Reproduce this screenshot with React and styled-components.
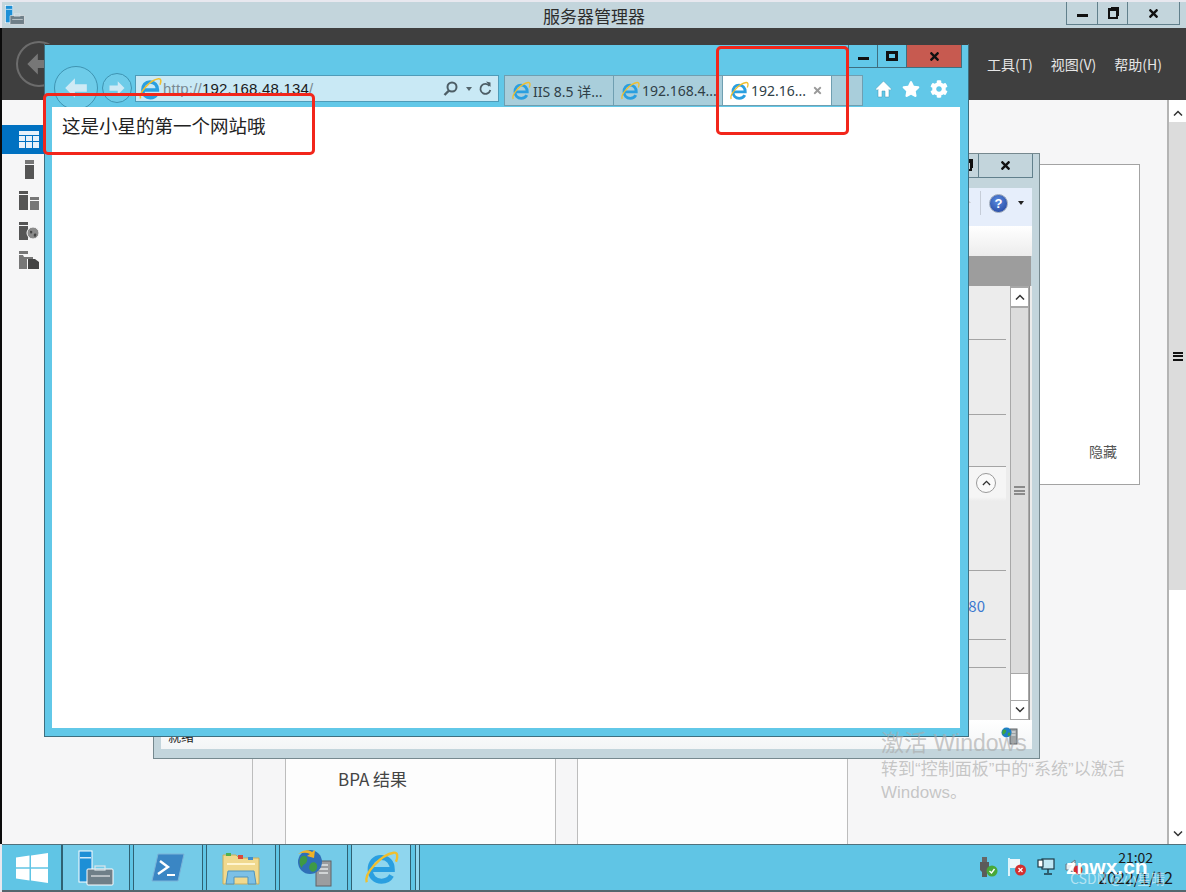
import React from 'react'
import styled, { createGlobalStyle } from 'styled-components'
import { FaStar, FaCog, FaTimes } from 'react-icons/fa'

const cjk = '"Noto Sans CJK SC", "Noto Sans", sans-serif'

const GlobalStyle = createGlobalStyle`
  html, body {
    margin: 0;
    padding: 0;
    background: #e8e8ef;
  }
  * {
    box-sizing: border-box;
  }
`

const Desktop = styled.div`
  position: relative;
  width: 1186px;
  height: 892px;
  overflow: hidden;
  padding-top: 2px;
  display: flex;
  flex-direction: column;
  font-family: ${cjk};
  color: #333;
  background: #e8e8ef;
`

const TitleBar = styled.header`
  height: 26px;
  flex: none;
  margin-left: 2px;
  background: #c3d5dc;
  display: flex;
  justify-content: center;
  position: relative;
  align-items: center;
  font-size: 17px;
  color: #2d2d2d;
`

const AppIcon = styled.div`
  position: absolute;
  left: 3px;
  top: 3px;
  line-height: 0;
`

const CaptionGroup = styled.div`
  position: absolute;
  top: 0;
  right: ${p => p.$right}px;
  display: flex;
`

const CaptionButton = styled.div`
  width: ${p => p.$w}px;
  height: ${p => p.$h || 23}px;
  display: flex;
  align-items: center;
  justify-content: center;
  background: ${p => p.$bg || 'transparent'};
  border: 1px solid ${p => p.$line || '#61808c'};
  border-top: 0;
  border-left-width: ${p => (p.$first ? 1 : 0)}px;
  color: #111;
`

const MinGlyph = styled.span`
  width: 11px;
  height: 3px;
  margin-top: 4px;
  background: #111;
`

const MaxGlyph = styled.span`
  width: 12px;
  height: 10px;
  border: 3px solid #111;
`

const RestoreGlyph = styled.span`
  width: 10px;
  height: 11px;
  border: 2px solid #111;
  border-top-width: 3px;
  box-shadow: 2px -2px 0 -1px #111;
`

const NavBar = styled.nav`
  height: 72px;
  flex: none;
  background: #3f3f3f;
  border-left: 2px solid #0b0b0b;
  display: flex;
  align-items: center;
  justify-content: space-between;
  padding: 0 24px 0 14px;
`

const BackCircle = styled.div`
  width: 46px;
  height: 46px;
  border-radius: 50%;
  border: 2px solid #6c6c6c;
  display: flex;
  align-items: center;
  justify-content: center;
  color: #777;
`

const MenuList = styled.div`
  display: flex;
  gap: 18px;
  font-size: 14px;
  color: #e6e6e6;
`

const Body = styled.div`
  flex: 1;
  min-height: 0;
  display: flex;
  border-left: 2px solid #0b0b0b;
  background: #f6f6f7;
`

const Sidebar = styled.aside`
  width: 42px;
  flex: none;
  padding-top: 25px;
  display: flex;
  flex-direction: column;
`

const SideItem = styled.div`
  height: ${p => p.$h}px;
  padding-left: 12px;
  display: flex;
  align-items: center;
  justify-content: center;
  background: ${p => (p.$active ? '#0071c1' : 'transparent')};
`

const Main = styled.main`
  flex: 1;
  min-width: 0;
  padding-top: 64px;
  display: flex;
  flex-direction: column;
`

const HidePanel = styled.section`
  align-self: flex-end;
  margin-right: 27px;
  width: 200px;
  height: 321px;
  background: #fff;
  border: 1px solid #a3a3a3;
  display: flex;
  align-items: flex-end;
  justify-content: flex-end;
  padding: 0 22px 23px 0;
  font-size: 14px;
  color: #555;
`

const TileRow = styled.div`
  flex: 1;
  margin-top: 15px;
  display: flex;
`

const Tile = styled.div`
  width: ${p => p.$w}px;
  margin-right: ${p => p.$gap}px;
  background: ${p => (p.$blank ? 'transparent' : '#fdfdfd')};
  border-right: 1px solid #bdbdbd;
  border-left: ${p => (p.$blank ? 0 : '1px solid #bdbdbd')};
  padding: 266px 0 0 52px;
  font-size: 17px;
  color: #444;
`

const PageScroll = styled.div`
  width: 19px;
  flex: none;
  padding-top: 4px;
  background: #fff;
  border-left: 2px solid #b4b4b4;
  display: flex;
  flex-direction: column;
`

const ScrollButton = styled.div`
  height: ${p => p.$h || 18}px;
  flex: none;
  background: #fff;
  display: flex;
  align-items: center;
  justify-content: center;
  color: #333;
`

const ScrollThumb = styled.div`
  height: ${p => p.$h}px;
  flex: none;
  background: #dcdcdc;
  display: flex;
  align-items: center;
  justify-content: center;
`

const ScrollFill = styled.div`
  flex: 1;
`

const Grip = styled.span`
  width: ${p => p.$w}px;
  height: 9px;
  border-top: 2px solid ${p => p.$color};
  border-bottom: 2px solid ${p => p.$color};
  position: relative;
  &::after {
    content: '';
    position: absolute;
    left: 0;
    right: 0;
    top: 1.5px;
    height: 2px;
    background: ${p => p.$color};
  }
`

const Taskbar = styled.footer`
  height: 48px;
  flex: none;
  margin-left: 2px;
  background: #60c5e5;
  border-top: 1px solid #51717c;
  border-bottom: 2px solid #55666d;
  display: flex;
  position: relative;
`

const TaskButton = styled.div`
  width: ${p => p.$w}px;
  margin-right: ${p => p.$gap ?? 3}px;
  flex: none;
  background: ${p => (p.$active ? '#8fd6ee' : p.$plain ? 'transparent' : '#74cbe8')};
  border-right: 1px solid #2f6173;
  border-left: ${p => (p.$plain ? 0 : '1px solid #2f6173')};
  display: flex;
  align-items: center;
  justify-content: center;
`

const Tray = styled.div`
  position: absolute;
  left: 977px;
  top: 12px;
  display: flex;
  gap: 10px;
  align-items: center;
`

const Clock = styled.div`
  position: absolute;
  right: 13px;
  top: 3px;
  text-align: center;
  font-size: 14px;
  line-height: 19px;
  color: #1a1a1a;
`

const ClockDate = styled.div`
  font-size: 16px;
  line-height: 21px;
`

const StampBrand = styled.div`
  position: absolute;
  left: 1064px;
  top: 10px;
  font-family: "Liberation Sans", sans-serif;
  font-size: 21px;
  font-weight: 700;
  line-height: 24px;
  color: #fff;
`

const StampAuthor = styled.div`
  position: absolute;
  left: 1068px;
  top: 23px;
  font-size: 14px;
  line-height: 20px;
  color: rgba(255, 255, 255, 0.55);
`

const Window = styled.div`
  position: absolute;
  left: ${p => p.$x}px;
  top: ${p => p.$y}px;
  width: ${p => p.$w}px;
  height: ${p => p.$h}px;
  display: flex;
  flex-direction: column;
`

const BackWindow = styled(Window)`
  background: #c3d5dc;
  border: 1px solid #76898f;
  padding: 0 7px 9px;
`

const BackCaption = styled.div`
  height: 34px;
  flex: none;
  position: relative;
`

const BackToolbar = styled.div`
  height: 38px;
  flex: none;
  background: #e6eefb;
  display: flex;
  align-items: center;
  justify-content: flex-end;
  gap: 8px;
  padding: 0 8px 8px 0;
  color: #222;
`

const ToolDivider = styled.span`
  width: 1px;
  height: 24px;
  background: #c6cdd8;
`

const HelpBadge = styled.span`
  width: 19px;
  height: 19px;
  border-radius: 50%;
  background: radial-gradient(circle at 45% 35%, #5a8ce0, #1f3f9a);
  border: 1px solid #9aa6b8;
  color: #fff;
  font-family: "Liberation Sans", sans-serif;
  font-size: 13px;
  font-weight: 700;
  line-height: 17px;
  text-align: center;
`

const DropArrow = styled.span`
  width: 0;
  height: 0;
  margin: 0 0 0 2px;
  border-left: 3px solid transparent;
  border-right: 3px solid transparent;
  border-top: 4px solid ${p => p.$color || '#222'};
`

const BackBand = styled.div`
  height: 30px;
  flex: none;
  background: linear-gradient(#fff, #ececec);
`

const GreyBand = styled.div`
  height: 30px;
  flex: none;
  margin-right: 1px;
  background: #9d9d9d;
`

const ListArea = styled.div`
  height: 434px;
  flex: none;
  display: flex;
  background: #ececec;
`

const ListRows = styled.div`
  flex: 1;
  padding-right: 4px;
`

const ListRow = styled.div`
  height: ${p => p.$h}px;
  border-bottom: 1px solid #a4a4a4;
  display: flex;
  align-items: ${p => (p.$top ? 'flex-start' : 'center')};
  justify-content: flex-end;
  padding-right: ${p => p.$pad || 0}px;
  padding-top: ${p => (p.$top ? 6 : 0)}px;
  font-size: 15px;
  color: #3b78d0;
  background: ${p => (p.$light ? 'linear-gradient(#f5f5f5 0, #f5f5f5 30px, #ececec 34px)' : 'transparent')};
`

const Collapse = styled.span`
  width: 20px;
  height: 20px;
  border-radius: 50%;
  border: 1px solid #9a9a9a;
  background: #fafafa;
  display: flex;
  align-items: center;
  justify-content: center;
`

const ListScroll = styled.div`
  width: 20px;
  flex: none;
  margin-right: 2px;
  padding: 2px 1px 1px;
  display: flex;
  flex-direction: column;
  border-right: 1px solid #8f8f8f;
  background: #a8a8a8;
`

const ListThumb = styled.div`
  height: 365px;
  flex: none;
  margin-top: 2px;
  background: #dcdcdc;
  display: flex;
  align-items: center;
  justify-content: center;
`

const ListGap = styled.div`
  flex: 1;
  margin: 1px 0;
  background: #fff;
`

const StatusBar = styled.div`
  flex: 1;
  background: linear-gradient(#fff, #f3f5f6);
  display: flex;
  justify-content: flex-end;
  position: relative;
  padding: 7px 14px 0 0;
`

const StatusText = styled.span`
  position: absolute;
  left: 7px;
  top: 7px;
  font-size: 13px;
  line-height: 18px;
  color: #222;
`

const IeWindow = styled(Window)`
  background: #62c8e8;
  border: 1px solid #3e6f80;
  border-top: 0;
`

const IeCaption = styled.div`
  height: 31px;
  flex: none;
  position: relative;
  border-top: 1px solid #3f3f3f;
`

const IeNavRow = styled.div`
  height: 32px;
  flex: none;
  display: flex;
  align-items: flex-start;
  padding-left: 9px;
`

const HistoryCircle = styled.div`
  width: ${p => p.$size}px;
  height: ${p => p.$size}px;
  margin-top: ${p => p.$top}px;
  margin-right: ${p => p.$right}px;
  flex: none;
  border-radius: 50%;
  border: 1px solid #3f94b2;
  background: rgba(255, 255, 255, 0.08);
  display: flex;
  align-items: center;
  justify-content: center;
`

const AddressBar = styled.div`
  width: 364px;
  height: 27px;
  flex: none;
  margin-right: 5px;
  padding: 0 6px 0 2px;
  background: #c9e9f5;
  border: 1px solid #4f9cb9;
  display: flex;
  align-items: center;
  font-family: "Liberation Sans", sans-serif;
  font-size: 15px;
  letter-spacing: 0.2px;
  color: #7a8a92;
`

const UrlHost = styled.span`
  color: #1b1b1b;
`

const UrlText = styled.span`
  margin-left: 1px;
  flex: 1;
  white-space: nowrap;
`

const AddressTools = styled.span`
  display: flex;
  align-items: center;
  gap: 6px;
  color: #55666d;
`

const TabStrip = styled.div`
  display: flex;
  height: 31px;
`

const Tab = styled.div`
  width: ${p => p.$w}px;
  flex: none;
  height: 31px;
  padding: 0 5px 0 6px;
  display: flex;
  align-items: center;
  gap: 2px;
  background: ${p => (p.$active ? '#fff' : '#a9cedb')};
  border: 1px solid #6f9fb1;
  border-left-width: ${p => (p.$first ? 1 : 0)}px;
  font-family: "Noto Sans", ${cjk};
  font-size: 14px;
  color: #2f3f47;
  white-space: nowrap;
  overflow: hidden;
`

const TabLabel = styled.span`
  flex: 1;
  overflow: hidden;
`

const TabClose = styled.span`
  color: #9a9a9a;
  line-height: 0;
  padding-right: 3px;
`

const IeTools = styled.div`
  margin-left: 12px;
  height: 27px;
  display: flex;
  align-items: center;
  gap: 10px;
  color: #fff;
`

const Page = styled.div`
  flex: 1;
  margin: 0 8px 8px 7px;
  position: relative;
  background: #fff;
  padding: 4px 10px;
  font-size: 18.5px;
  line-height: 28px;
  color: #222;
`

const Highlight = styled.div`
  position: absolute;
  left: ${p => p.$x}px;
  top: ${p => p.$y}px;
  width: ${p => p.$w}px;
  height: ${p => p.$h}px;
  border: 3px solid #f2261b;
  border-radius: 5px;
`

const Watermark = styled.div`
  position: absolute;
  left: 881px;
  top: 728px;
  font-family: "Liberation Sans", ${cjk};
  font-size: 17px;
  line-height: 23px;
  white-space: nowrap;
  color: rgba(170, 170, 170, 0.65);
`

const WatermarkTitle = styled.div`
  font-size: 23px;
  line-height: 30px;
`

const IeLogo = ({ size = 18 }) => (
  <svg width={size} height={size} viewBox="0 0 24 24" fill="none">
    <path d="M5 13h14.500c0-5-3-8-7.500-8S4.800 8.300 4.800 13s3.200 7.800 7.500 7.800c3 0 5.400-1.400 6.700-3.800" stroke="#2a9fe0" strokeWidth="3.400" />
    <path d="M2.500 21.500C.5 16 12 3 20.500 1.800c2.500-.3 3 2.200 1.500 6" stroke="#f0bf2e" strokeWidth="1.600" />
  </svg>
)

const ServerManagerIcon = ({ size = 36 }) => (
  <svg width={size} height={size} viewBox="0 0 36 36">
    <rect x="1" y="1" width="13" height="31" fill="#1d8fd6" stroke="#fff" strokeWidth="1" />
    <rect x="2" y="7" width="11" height="1.500" fill="#cfeaf8" />
    <rect x="9" y="19" width="26" height="16" rx="1" fill="#6f7f88" stroke="#fff" strokeWidth="1" />
    <rect x="17" y="16" width="10" height="4" fill="none" stroke="#dbe5ea" strokeWidth="1.200" />
    <path d="M13 26h19" stroke="#fff" strokeWidth="1" />
  </svg>
)

const PowerShellIcon = () => (
  <svg width="34" height="30" viewBox="0 0 34 30">
    <path d="M7 1h26l-6 27H1z" fill="#3a86c4" stroke="#7ab3d8" strokeWidth="1" />
    <path d="M9 8l8 6-10 7" fill="none" stroke="#fff" strokeWidth="2.400" />
    <path d="M16 22h8" stroke="#fff" strokeWidth="2" />
  </svg>
)

const FolderIcon = () => (
  <svg width="38" height="34" viewBox="0 0 38 34">
    <path d="M1 4h13l3 3h20v26H1z" fill="#f0d98e" stroke="#c9ad5c" strokeWidth="1" />
    <rect x="4" y="2" width="5" height="3" fill="#4fb04f" />
    <rect x="16" y="4" width="5" height="4" fill="#d9483b" />
    <rect x="26" y="6" width="5" height="3" fill="#3d8fd0" />
    <path d="M5 12h28v2H5z" fill="#fff5cf" />
    <path d="M6 20h26l2 13h-8v-7H12v7H4z" fill="#7cc0e6" stroke="#4f94bd" strokeWidth="1" />
  </svg>
)

const NetworkIcon = () => (
  <svg width="36" height="38" viewBox="0 0 36 38">
    <rect x="20" y="12" width="15" height="25" fill="#9b9d9f" stroke="#5f6366" strokeWidth="1" />
    <path d="M23 16h9M23 20h9M23 24h9" stroke="#e4e6e8" strokeWidth="1.500" />
    <circle cx="14" cy="13" r="12" fill="#2f6fb7" />
    <path d="M5 8c4-3 7 0 6 4s-5 3-5 7c-3-3-3-8-1-11zM15 14c4-2 7 1 6 5s-5 5-7 2 0-5 1-7z" fill="#3e9a45" />
    <path d="M2 5c5-4 10-5 14-2l3-2-1 8-7-2 3-2c-4-2-8-1-12 0z" fill="#f2b227" />
  </svg>
)

const WindowsLogo = () => (
  <svg width="32" height="30" viewBox="0 0 32 30">
    <path d="M0 4.500L13.500 2.600V14.200H0zM15 2.400L32 0V14.200H15zM0 15.800H13.500V27.400L0 25.500zM15 15.800H32V30L15 27.600z" fill="#fff" />
  </svg>
)

const GridIcon = () => (
  <svg width="20" height="17" viewBox="0 0 20 17">
    <path d="M0 0h20v4H0zM0 5h6v5H0zM7 5h6v5H7zM14 5h6v5h-6zM0 11h6v6H0zM7 11h6v6H7zM14 11h6v6h-6z" fill="#e8f2fa" />
  </svg>
)

const TowerIcon = () => (
  <svg width="9" height="19" viewBox="0 0 9 19">
    <rect width="9" height="4" fill="#777" />
    <rect y="5" width="9" height="14" fill="#555" />
  </svg>
)

const ServersIcon = () => (
  <svg width="20" height="19" viewBox="0 0 20 19">
    <path d="M0 0h9v3H0zM0 4h9v15H0z" fill="#555" />
    <path d="M11 6h9v3h-9zM11 10h9v9h-9z" fill="#777" />
  </svg>
)

const GlobeTowerIcon = () => (
  <svg width="20" height="18" viewBox="0 0 20 18">
    <path d="M0 0h9v3H0zM0 4h9v14H0z" fill="#555" />
    <circle cx="14" cy="11" r="6" fill="#8a8a8a" stroke="#f6f6f7" strokeWidth="1" />
    <path d="M11 9c2-1 3 1 2 2s-2 1-2-2zM15 12c2-1 3 0 2 2s-3 0-2-2z" fill="#444" />
  </svg>
)

const FilesIcon = () => (
  <svg width="20" height="18" viewBox="0 0 20 18">
    <path d="M0 0h9v3H0zM0 4h4l1 2h9v2H8v10H0z" fill="#777" />
    <path d="M9 8h7l4 3v7H9z" fill="#444" />
  </svg>
)

const HomeGlyph = () => (
  <svg width="17" height="18" viewBox="0 0 17 18">
    <path d="M8.500 1L.5 9l1.500 1.500L3 9.500V17h4v-6h3v6h4V9.500l1 1L16.500 9z" fill="#fff" stroke="#3f94b2" strokeWidth="0.500" />
  </svg>
)

const FadedHome = () => (
  <svg width="16" height="16" viewBox="0 0 17 18">
    <path d="M8.500 1L.5 9h2.500v8h11V9h2.500z" fill="#c7c9cc" />
  </svg>
)

const Chevron = ({ up, color = '#333', size = 10 }) => (
  <svg width={size} height={size * 0.6} viewBox="0 0 10 6">
    <path d={up ? 'M1 5.500L5 1.500l4 4' : 'M1 .5l4 4 4-4'} fill="none" stroke={color} strokeWidth="1.500" />
  </svg>
)

const ArrowIcon = ({ size, dir = 'left', color }) => (
  <svg width={size} height={size} viewBox="0 0 24 24" style={{ transform: dir === 'right' ? 'scaleX(-1)' : 'none' }}>
    <path d="M11 3L2 12l9 9v-5.500h11v-7H11z" fill={color} />
  </svg>
)

const SearchIcon = () => (
  <svg width="15" height="15" viewBox="0 0 15 15" fill="none">
    <circle cx="9" cy="6" r="4.500" stroke="#4d5e66" strokeWidth="2" />
    <path d="M6 9.500L1.500 14" stroke="#4d5e66" strokeWidth="2.400" />
  </svg>
)

const RefreshIcon = () => (
  <svg width="14" height="15" viewBox="0 0 14 15" fill="none">
    <path d="M11.500 5a5 5 0 1 0 .8 4" stroke="#4d5e66" strokeWidth="1.800" />
    <path d="M8 .5l4.500 1v4.500z" fill="#4d5e66" />
  </svg>
)

const UsbTray = () => (
  <svg width="19" height="20" viewBox="0 0 19 20">
    <path d="M3 0h5v5H3z" fill="#666" />
    <path d="M1 5h9v8l-2 2v5H3v-5l-2-2z" fill="#5b5b5b" />
    <circle cx="13" cy="14" r="5.500" fill="#48a838" />
    <path d="M10.500 14l2 2 3-4" fill="none" stroke="#fff" strokeWidth="1.400" />
  </svg>
)

const FlagTray = () => (
  <svg width="19" height="18" viewBox="0 0 19 18">
    <path d="M1 0v18" stroke="#fff" strokeWidth="1.600" />
    <path d="M2 1h10v9H2z" fill="#eef7fb" />
    <circle cx="12.500" cy="12" r="5.500" fill="#d32f2f" />
    <path d="M10.500 10l4 4m0-4l-4 4" stroke="#fff" strokeWidth="1.300" />
  </svg>
)

const NetTray = () => (
  <svg width="18" height="18" viewBox="0 0 18 18" fill="none">
    <rect x="5" y="1" width="12" height="10" stroke="#1c3a46" strokeWidth="1.200" fill="#bfe7f4" />
    <rect x="1" y="2" width="5" height="7" stroke="#1c3a46" strokeWidth="1.200" fill="#fff" />
    <path d="M11 11v4M7 16h8" stroke="#1c3a46" strokeWidth="1.400" />
  </svg>
)

const SpeakerTray = () => (
  <svg width="18" height="18" viewBox="0 0 18 18">
    <path d="M1 6h4l5-4v14l-5-4H1z" fill="#e6eef2" stroke="#66777f" strokeWidth="1" />
    <circle cx="13" cy="12" r="4.500" fill="#d32f2f" />
  </svg>
)

const ServerGlobeIcon = () => (
  <svg width="17" height="18" viewBox="0 0 17 18">
    <rect x="9" y="2" width="7" height="15" fill="#9ea4a6" stroke="#5f6366" strokeWidth="1" />
    <path d="M10.500 5h4M10.500 8h4" stroke="#eef0f1" strokeWidth="1" />
    <circle cx="5.500" cy="5.500" r="5" fill="#1f7fc7" />
    <path d="M2 3c2-1 4 0 3 2s-3 2-3 3c-1-1-1-3 0-5zM7 6c2-1 3 0 2 2s-3 1-2-2z" fill="#3ea63f" />
  </svg>
)

const App = () => (
  <Desktop>
    <GlobalStyle />
    <TitleBar>
      <AppIcon><ServerManagerIcon size={20} /></AppIcon>
      服务器管理器
      <CaptionGroup $right={6}>
        <CaptionButton $w={32} $first><MinGlyph /></CaptionButton>
        <CaptionButton $w={30}><RestoreGlyph /></CaptionButton>
        <CaptionButton $w={52}><FaTimes size={13} /></CaptionButton>
      </CaptionGroup>
    </TitleBar>

    <NavBar>
      <BackCircle><ArrowIcon size={28} color="#777" /></BackCircle>
      <MenuList>
        <span>工具(T)</span>
        <span>视图(V)</span>
        <span>帮助(H)</span>
      </MenuList>
    </NavBar>

    <Body>
      <Sidebar>
        <SideItem $h={29} $active><GridIcon /></SideItem>
        <SideItem $h={30}><TowerIcon /></SideItem>
        <SideItem $h={32}><ServersIcon /></SideItem>
        <SideItem $h={29}><GlobeTowerIcon /></SideItem>
        <SideItem $h={29}><FilesIcon /></SideItem>
      </Sidebar>
      <Main>
        <HidePanel>隐藏</HidePanel>
        <TileRow>
          <Tile $w={209} $gap={32} $blank />
          <Tile $w={271} $gap={21}>BPA 结果</Tile>
          <Tile $w={271} $gap={0} />
        </TileRow>
      </Main>
      <PageScroll>
        <ScrollButton><Chevron up /></ScrollButton>
        <ScrollThumb $h={468}><Grip $w={10} $color="#111" /></ScrollThumb>
        <ScrollFill />
        <ScrollButton><Chevron /></ScrollButton>
        <ScrollButton $h={1} />
      </PageScroll>
    </Body>

    <Taskbar>
      <TaskButton $w={60} $gap={0} $plain><WindowsLogo /></TaskButton>
      <TaskButton $w={68} $gap={3}><ServerManagerIcon /></TaskButton>
      <TaskButton $w={70}><PowerShellIcon /></TaskButton>
      <TaskButton $w={70}><FolderIcon /></TaskButton>
      <TaskButton $w={69}><NetworkIcon /></TaskButton>
      <TaskButton $w={60} $gap={4} $active><IeLogo size={36} /></TaskButton>
      <TaskButton $w={5} $gap={0} $active />
      <Tray>
        <UsbTray />
        <FlagTray />
        <NetTray />
        <SpeakerTray />
      </Tray>
      <Clock>
        21:02
        <ClockDate>2022/1/12</ClockDate>
      </Clock>
      <StampAuthor>CSDN @小星晴</StampAuthor>
      <StampBrand>znwx.cn</StampBrand>
    </Taskbar>

    <BackWindow $x={153} $y={153} $w={887} $h={606}>
      <BackCaption>
        <CaptionGroup $right={-1}>
          <CaptionButton $w={24} $h={24} $first><RestoreGlyph /></CaptionButton>
          <CaptionButton $w={54} $h={24}><FaTimes size={13} /></CaptionButton>
        </CaptionGroup>
      </BackCaption>
      <BackToolbar>
        <FadedHome />
        <ToolDivider />
        <HelpBadge>?</HelpBadge>
        <DropArrow />
      </BackToolbar>
      <BackBand />
      <GreyBand />
      <ListArea>
        <ListRows>
          <ListRow $h={54} />
          <ListRow $h={75} />
          <ListRow $h={52} />
          <ListRow $h={104} $top $light $pad={10}>
            <Collapse><Chevron up size={9} /></Collapse>
          </ListRow>
          <ListRow $h={69} $pad={21}>80</ListRow>
          <ListRow $h={28} />
        </ListRows>
        <ListScroll>
          <ScrollButton><Chevron up /></ScrollButton>
          <ListThumb><Grip $w={11} $color="#8a8a8a" /></ListThumb>
          <ListGap />
          <ScrollButton><Chevron /></ScrollButton>
        </ListScroll>
      </ListArea>
      <StatusBar>
        <StatusText>就绪</StatusText>
        <ServerGlobeIcon />
      </StatusBar>
    </BackWindow>

    <IeWindow $x={44} $y={44} $w={925} $h={693}>
      <IeCaption>
        <CaptionGroup $right={6}>
          <CaptionButton $w={30} $first $line="#3e6f80"><MinGlyph /></CaptionButton>
          <CaptionButton $w={29} $line="#3e6f80"><MaxGlyph /></CaptionButton>
          <CaptionButton $w={55} $bg="#c75a50" $line="#3e6f80"><FaTimes size={13} /></CaptionButton>
        </CaptionGroup>
      </IeCaption>
      <IeNavRow>
        <HistoryCircle $size={44} $top={-9} $right={4}><ArrowIcon size={26} color="#cfeaf5" /></HistoryCircle>
        <HistoryCircle $size={30} $top={-2} $right={3}><ArrowIcon size={18} dir="right" color="#cfeaf5" /></HistoryCircle>
        <AddressBar>
          <IeLogo size={24} />
          <UrlText>http://<UrlHost>192.168.48.134</UrlHost>/</UrlText>
          <AddressTools>
            <SearchIcon />
            <DropArrow $color="#55666d" />
            <RefreshIcon />
          </AddressTools>
        </AddressBar>
        <TabStrip>
          <Tab $w={110} $first><IeLogo size={20} /><TabLabel>IIS 8.5 详...</TabLabel></Tab>
          <Tab $w={109}><IeLogo size={20} /><TabLabel>192.168.4...</TabLabel></Tab>
          <Tab $w={109} $active>
            <IeLogo size={20} />
            <TabLabel>192.16...</TabLabel>
            <TabClose><FaTimes size={11} /></TabClose>
          </Tab>
          <Tab $w={31} />
        </TabStrip>
        <IeTools>
          <HomeGlyph />
          <FaStar size={18} />
          <FaCog size={18} />
        </IeTools>
      </IeNavRow>
      <Page>这是小星的第一个网站哦</Page>
    </IeWindow>

    <Watermark>
      <WatermarkTitle>激活 Windows</WatermarkTitle>
      转到“控制面板”中的“系统”以激活
      <br />
      Windows。
    </Watermark>

    <Highlight $x={43} $y={93} $w={272} $h={62} />
    <Highlight $x={716} $y={46} $w={133} $h={89} />
  </Desktop>
)

export default App
